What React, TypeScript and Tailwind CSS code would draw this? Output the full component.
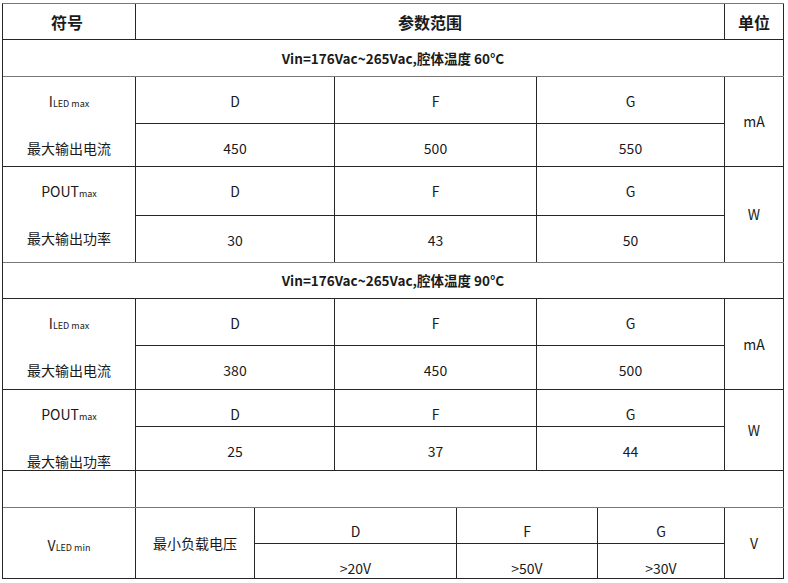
import React from "react";

const font = { fontFamily: '"Noto Sans CJK SC", "Noto Sans", sans-serif' };

function Sym({ main, sub }: { main: string; sub: string }) {
  return (
    <span className="whitespace-nowrap">
      {main}
      <span className="text-[9px]">{sub}</span>
    </span>
  );
}

function LeftCell({ top, bottom }: { top: React.ReactNode; bottom: string }) {
  return (
    <div className="w-[133px] shrink-0 border-r border-[#262626] flex flex-col items-center pt-[14px]">
      <div className="h-[20px] leading-[20px]">{top}</div>
      <div className="h-[20px] leading-[20px] mt-[27px]">{bottom}</div>
    </div>
  );
}

function SubRow({ vals, h, last }: { vals: string[]; h?: string; last?: boolean }) {
  const widths = ["w-[199px]", "w-[202px]", "w-[188px]"];
  return (
    <div className={`flex ${last ? "flex-1" : `${h} border-b border-[#262626]`}`}>
      {vals.map((v, i) => (
        <div
          key={i}
          className={`${widths[i]} shrink-0 border-r border-[#262626] flex justify-center pt-[14px]`}
        >
          <div className="h-[20px] leading-[20px]">{v}</div>
        </div>
      ))}
    </div>
  );
}

function Block({
  rowH,
  subH,
  left,
  leftBottom,
  letters,
  values,
  unit,
  lineColor,
}: {
  rowH: string;
  subH: string;
  left: React.ReactNode;
  leftBottom: string;
  letters: string[];
  values: string[];
  unit: string;
  lineColor: string;
}) {
  return (
    <div className={`flex ${rowH} border-b ${lineColor}`}>
      <LeftCell top={left} bottom={leftBottom} />
      <div className="w-[589px] shrink-0 flex flex-col">
        <SubRow vals={letters} h={subH} />
        <SubRow vals={values} last />
      </div>
      <div className="w-[59px] shrink-0 border-r border-[#262626] flex items-center justify-center">
        {unit}
      </div>
    </div>
  );
}

function VinRow({ text, h, lineColor }: { text: string; h: string; lineColor: string }) {
  return (
    <div className={`flex ${h} border-b ${lineColor}`}>
      <div className="w-[781px] shrink-0 border-r border-[#262626] flex items-center justify-center text-[13.5px] font-bold">
        {text}
      </div>
    </div>
  );
}

export default function App() {
  return (
    <div className="w-[788px] h-[583px] bg-white text-[#1a1a1a] text-[14px]" style={font}>
      <div className="ml-[2px] mt-[3px] w-[782px] border-l border-t border-l-[#262626] border-t-[#777777] flex flex-col">
        {/* header */}
        <div className="flex h-[36px] border-b border-[#262626] text-[16px] font-bold">
          <div className="w-[133px] shrink-0 border-r border-[#262626] flex items-center justify-center pr-[4px]">
            符号
          </div>
          <div className="w-[589px] shrink-0 border-r border-[#262626] flex items-center justify-center">
            参数范围
          </div>
          <div className="w-[59px] shrink-0 border-r border-[#262626] flex items-center justify-center">
            单位
          </div>
        </div>

        <VinRow text="Vin=176Vac~265Vac,腔体温度 60°C" h="h-[37px]" lineColor="border-[#777777]" />

        <Block
          rowH="h-[90px]"
          subH="h-[47px]"
          left={<Sym main="I" sub="LED max" />}
          leftBottom="最大输出电流"
          letters={["D", "F", "G"]}
          values={["450", "500", "550"]}
          unit="mA"
          lineColor="border-[#262626]"
        />
        <Block
          rowH="h-[96px]"
          subH="h-[49px]"
          left={<Sym main="POUT" sub="max" />}
          leftBottom="最大输出功率"
          letters={["D", "F", "G"]}
          values={["30", "43", "50"]}
          unit="W"
          lineColor="border-[#777777]"
        />

        <VinRow text="Vin=176Vac~265Vac,腔体温度 90°C" h="h-[36px]" lineColor="border-[#262626]" />

        <Block
          rowH="h-[91px]"
          subH="h-[47px]"
          left={<Sym main="I" sub="LED max" />}
          leftBottom="最大输出电流"
          letters={["D", "F", "G"]}
          values={["380", "450", "500"]}
          unit="mA"
          lineColor="border-[#262626]"
        />
        <Block
          rowH="h-[81px]"
          subH="h-[37px]"
          left={<Sym main="POUT" sub="max" />}
          leftBottom="最大输出功率"
          letters={["D", "F", "G"]}
          values={["25", "37", "44"]}
          unit="W"
          lineColor="border-[#262626]"
        />

        {/* empty row */}
        <div className="flex h-[37px] border-b border-[#777777]">
          <div className="w-[133px] shrink-0 border-r border-[#262626]" />
          <div className="w-[648px] shrink-0 border-r border-[#262626]" />
        </div>

        {/* VLED row */}
        <div className="flex h-[71px] border-b border-[#262626]">
          <div className="w-[133px] shrink-0 border-r border-[#262626] flex items-center justify-center pt-[4px]">
            <Sym main="V" sub="LED min" />
          </div>
          <div className="w-[119px] shrink-0 border-r border-[#262626] flex items-center justify-center">
            最小负载电压
          </div>
          <div className="w-[470px] shrink-0 flex flex-col">
            <div className="flex h-[36px] border-b border-[#262626]">
              {[
                ["w-[202px]", "D"],
                ["w-[141px]", "F"],
                ["w-[127px]", "G"],
              ].map(([w, t]) => (
                <div key={t} className={`${w} shrink-0 border-r border-[#262626] flex justify-center pt-[13px]`}>
                  <div className="h-[20px] leading-[20px]">{t}</div>
                </div>
              ))}
            </div>
            <div className="flex flex-1">
              {[
                ["w-[202px]", ">20V"],
                ["w-[141px]", ">50V"],
                ["w-[127px]", ">30V"],
              ].map(([w, t]) => (
                <div key={t} className={`${w} shrink-0 border-r border-[#262626] flex justify-center pt-[14px]`}>
                  <div className="h-[20px] leading-[20px]">{t}</div>
                </div>
              ))}
            </div>
          </div>
          <div className="w-[59px] shrink-0 border-r border-[#262626] flex items-center justify-center">
            V
          </div>
        </div>
      </div>
    </div>
  );
}
